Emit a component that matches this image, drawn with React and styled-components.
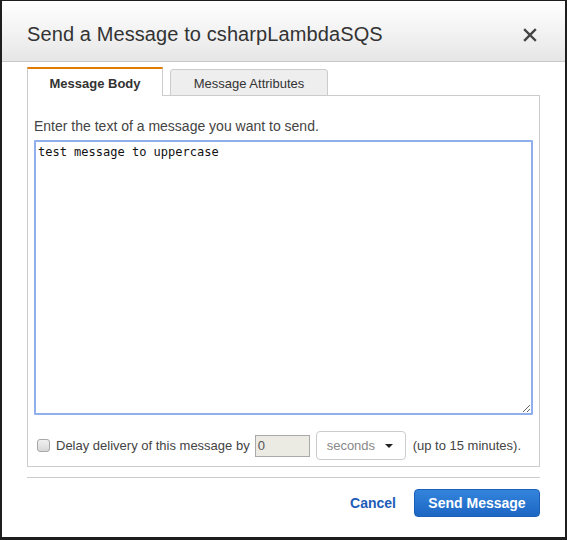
import { styled, createGlobalStyle } from "styled-components"

const Global = createGlobalStyle`
html, body { margin:0; padding:0; background:#fff; }
body { font-family:"Liberation Sans", Arial, sans-serif; }
`

const App = () => {
  return (
    <>
      <Global />
      <Frame>
        <Header>
          <Title>Send a Message to csharpLambdaSQS</Title>
          <Close aria-label="close">
            <svg width="14" height="14" viewBox="0 0 14 14">
              <path d="M2 2 L12 12 M12 2 L2 12" stroke="#444" strokeWidth="2.4" strokeLinecap="square" />
            </svg>
          </Close>
        </Header>
        <Body>
          <Tabs>
            <Tab $active>Message Body</Tab>
            <Tab>Message Attributes</Tab>
          </Tabs>
          <Panel>
            <Label>Enter the text of a message you want to send.</Label>
            <TextArea defaultValue="test message to uppercase" />
            <DelayRow>
              <Check type="checkbox" />
              <span>Delay delivery of this message by</span>
              <DelayInput defaultValue="0" />
              <Select>
                <span>seconds</span>
                <Caret />
              </Select>
              <Hint>(up to 15 minutes).</Hint>
            </DelayRow>
          </Panel>
          <Divider />
          <Footer>
            <Cancel>Cancel</Cancel>
            <Primary>Send Message</Primary>
          </Footer>
        </Body>
      </Frame>
    </>
  )
}

export default App


const Frame=styled.div`
width:567px;
height:540px;
box-sizing:border-box;
border-style:solid;
border-color:#1e1e1e;
border-width:1px 2px 3px 2px;
background:#fff;
display:flex;
flex-direction:column;
`

const Header=styled.div`
height:61px;
box-sizing:border-box;
display:flex;
align-items:center;
justify-content:space-between;
padding:7px 27px 0 25px;
background:linear-gradient(to bottom,#ffffff 0%,#f3f3f3 50%,#e6e6e6 100%);
border-bottom:1px solid #c8c8c8;
`

const Title=styled.h1`
margin:0;
font-size:20px;
font-weight:normal;
color:#333;
letter-spacing:0.1px;
`

const Close=styled.div`
width:14px;
height:14px;
display:flex;
margin-right:1px;
`

const Body=styled.div`
padding:6px 25px 0 25px;
display:flex;
flex-direction:column;
`

const Tabs=styled.div`
display:flex;
align-items:flex-end;
gap:7px;
height:28px;
position:relative;
z-index:1;
margin-bottom:-1px;
`

const Tab=styled.div`
box-sizing:border-box;
display:flex;
align-items:center;
justify-content:center;
font-size:13px;
color:#333;
${p => p.$active ? `
width:136px;
height:29px;
background:#fff;
font-weight:bold;
border-top:2px solid #e07b00;
border-left:1px solid #ccc;
border-right:1px solid #ccc;
padding-top:1px;
` : `
width:158px;
height:27px;
background:#eeeeee;
border:1px solid #ccc;
border-radius:3px 3px 0 0;
padding-top:2px;
`}
`

const Panel=styled.div`
border:1px solid #ccc;
padding:21px 6px 6px 6px;
display:flex;
flex-direction:column;
`

const Label=styled.div`
font-size:14px;
line-height:18px;
color:#444;
margin-bottom:5px;
`

const TextArea=styled.textarea`
box-sizing:border-box;
width:100%;
height:275px;
border:2px solid #8fb0ec;
border-radius:1px;
padding:3px 2px;
margin:0;
resize:vertical;
font-family:"DejaVu Sans Mono", "Liberation Mono", monospace;
font-size:12px;
color:#111;
outline:none;
`

const DelayRow=styled.div`
margin-top:16px;
height:29px;
display:flex;
align-items:center;
gap:5px;
font-size:13px;
color:#444;
`

const Check=styled.input`
appearance:none;
box-sizing:border-box;
margin:0 1px 0 3px;
width:13px;
height:13px;
border:1px solid #a8a8a8;
border-radius:3px;
background:linear-gradient(to bottom,#f0f0f0,#d8d8d8);
`

const DelayInput=styled.input`
box-sizing:border-box;
width:55px;
height:22px;
margin-left:0;
border:1px solid #a9a9a9;
background:#ebebe4;
font-family:"Liberation Sans", Arial, sans-serif;
font-size:13px;
color:#555;
padding:0 2px;
`

const Select=styled.div`
box-sizing:border-box;
width:90px;
height:29px;
border:1px solid #ccc;
border-radius:4px;
display:flex;
align-items:center;
justify-content:space-between;
padding:0 12px 0 10px;
color:#888;
font-size:13px;
margin:0 2px 0 1px;
`

const Caret=styled.span`
width:0;
height:0;
border-left:4px solid transparent;
border-right:4px solid transparent;
border-top:4px solid #222;
`

const Hint=styled.span`
color:#444;
`

const Divider=styled.div`
margin-top:10px;
height:1px;
background:#ccc;
`

const Footer=styled.div`
display:flex;
justify-content:flex-end;
align-items:center;
gap:18px;
padding-top:11px;
`

const Cancel=styled.span`
font-size:14px;
font-weight:bold;
color:#1e5cb8;
cursor:pointer;
`

const Primary=styled.button`
box-sizing:border-box;
width:126px;
height:28px;
border:1px solid #1a5fb8;
border-radius:4px;
background:linear-gradient(to bottom,#3384db 0%,#1c66c4 100%);
color:#fff;
font-family:"Liberation Sans", Arial, sans-serif;
font-size:14px;
font-weight:bold;
cursor:pointer;
padding:0;
`
